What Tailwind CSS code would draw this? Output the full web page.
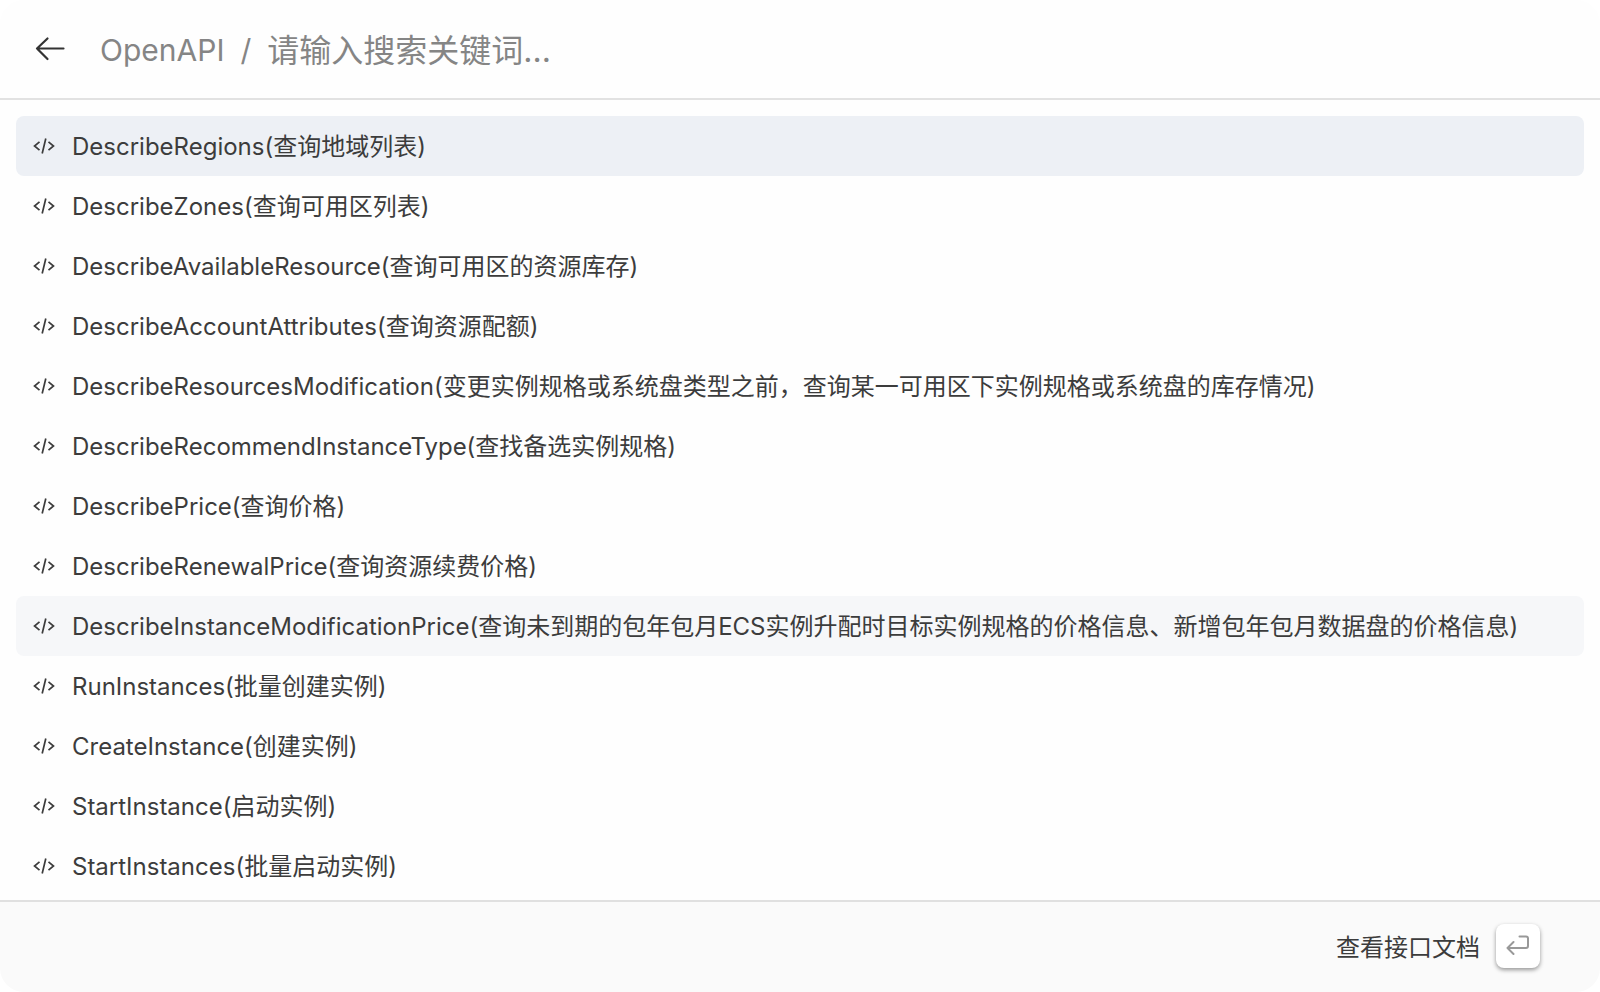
<!DOCTYPE html>
<html lang="zh-CN">
<head>
    <meta charset="UTF-8">
    <meta name="viewport" content="width=device-width, initial-scale=1.0">
    <title>OpenAPI</title>
    <script src="https://cdn.jsdelivr.net/npm/@tailwindcss/browser@4"></script>
</head>
<body class="bg-white font-['Inter','Noto_Sans_CJK_SC',sans-serif] text-[#3c3c3c]">
    <svg class="hidden">
        <symbol id="code" viewBox="0 0 24 24">
            <path d="M7.500 7.800 2.500 12l5 4.200M16.500 7.800l5 4.200-5 4.200M13.800 4.500 10.200 19.500" fill="none" stroke="currentColor" stroke-width="1.700"/>
        </symbol>
    </svg>

    <div class="flex flex-col min-h-screen rounded-3xl overflow-hidden bg-[#fefefe]">
        <header class="flex items-center h-25 px-8 gap-8 border-b-2 border-[#e2e2e2]">
            <button type="button" aria-label="返回" class="text-[#333]">
                <svg class="w-9 h-9" viewBox="0 0 36 36" fill="none" stroke="currentColor" stroke-width="2.2" stroke-linecap="round" stroke-linejoin="round">
                    <path d="M31.500 17.500H5M15.500 7.500 5 17.500l10.500 10.500"/>
                </svg>
            </button>
            <div class="flex flex-1 items-center gap-4 pt-0.5 text-[#858585]">
                <label for="search" class="flex gap-4 text-3xl"><span>OpenAPI</span><span>/</span></label>
                <input type="text" id="search" placeholder="请输入搜索关键词..." class="flex-1 min-w-0 h-16 text-[32px] outline-none bg-transparent placeholder:text-[#858585]">
            </div>
        </header>

        <main class="flex-1 px-4 pt-4 pb-1">
            <ul id="api-list">
                <li><button type="button" class="flex items-center w-full h-15 px-4 gap-4 rounded-lg text-2xl text-left bg-[#edf0f5]"><svg class="w-6 h-6 shrink-0"><use href="#code"/></svg><span class="pt-0.5">DescribeRegions(查询地域列表)</span></button></li>
                <li><button type="button" class="flex items-center w-full h-15 px-4 gap-4 rounded-lg text-2xl text-left"><svg class="w-6 h-6 shrink-0"><use href="#code"/></svg><span class="pt-0.5">DescribeZones(查询可用区列表)</span></button></li>
                <li><button type="button" class="flex items-center w-full h-15 px-4 gap-4 rounded-lg text-2xl text-left"><svg class="w-6 h-6 shrink-0"><use href="#code"/></svg><span class="pt-0.5">DescribeAvailableResource(查询可用区的资源库存)</span></button></li>
                <li><button type="button" class="flex items-center w-full h-15 px-4 gap-4 rounded-lg text-2xl text-left"><svg class="w-6 h-6 shrink-0"><use href="#code"/></svg><span class="pt-0.5">DescribeAccountAttributes(查询资源配额)</span></button></li>
                <li><button type="button" class="flex items-center w-full h-15 px-4 gap-4 rounded-lg text-2xl text-left"><svg class="w-6 h-6 shrink-0"><use href="#code"/></svg><span class="pt-0.5">DescribeResourcesModification(变更实例规格或系统盘类型之前，查询某一可用区下实例规格或系统盘的库存情况)</span></button></li>
                <li><button type="button" class="flex items-center w-full h-15 px-4 gap-4 rounded-lg text-2xl text-left"><svg class="w-6 h-6 shrink-0"><use href="#code"/></svg><span class="pt-0.5">DescribeRecommendInstanceType(查找备选实例规格)</span></button></li>
                <li><button type="button" class="flex items-center w-full h-15 px-4 gap-4 rounded-lg text-2xl text-left"><svg class="w-6 h-6 shrink-0"><use href="#code"/></svg><span class="pt-0.5">DescribePrice(查询价格)</span></button></li>
                <li><button type="button" class="flex items-center w-full h-15 px-4 gap-4 rounded-lg text-2xl text-left"><svg class="w-6 h-6 shrink-0"><use href="#code"/></svg><span class="pt-0.5">DescribeRenewalPrice(查询资源续费价格)</span></button></li>
                <li><button type="button" class="flex items-center w-full h-15 px-4 gap-4 rounded-lg text-2xl text-left bg-[#f6f7f9]"><svg class="w-6 h-6 shrink-0"><use href="#code"/></svg><span class="pt-0.5">DescribeInstanceModificationPrice(查询未到期的包年包月ECS实例升配时目标实例规格的价格信息、新增包年包月数据盘的价格信息)</span></button></li>
                <li><button type="button" class="flex items-center w-full h-15 px-4 gap-4 rounded-lg text-2xl text-left"><svg class="w-6 h-6 shrink-0"><use href="#code"/></svg><span class="pt-0.5">RunInstances(批量创建实例)</span></button></li>
                <li><button type="button" class="flex items-center w-full h-15 px-4 gap-4 rounded-lg text-2xl text-left"><svg class="w-6 h-6 shrink-0"><use href="#code"/></svg><span class="pt-0.5">CreateInstance(创建实例)</span></button></li>
                <li><button type="button" class="flex items-center w-full h-15 px-4 gap-4 rounded-lg text-2xl text-left"><svg class="w-6 h-6 shrink-0"><use href="#code"/></svg><span class="pt-0.5">StartInstance(启动实例)</span></button></li>
                <li><button type="button" class="flex items-center w-full h-15 px-4 gap-4 rounded-lg text-2xl text-left"><svg class="w-6 h-6 shrink-0"><use href="#code"/></svg><span class="pt-0.5">StartInstances(批量启动实例)</span></button></li>
            </ul>
        </main>

        <footer class="flex items-center justify-end h-23 px-15 pb-0.5 border-t-2 border-[#e0e0e0] bg-[#fafafa]">
            <button type="button" class="flex items-center gap-4 text-2xl">
                <span class="pt-1">查看接口文档</span>
                <kbd class="flex items-center justify-center w-11 h-11 rounded-lg bg-white text-[#999] shadow-[0_2px_4px_rgba(0,0,0,0.4)]">
                    <svg class="w-6 h-6" viewBox="0 0 24 24" fill="none" stroke="currentColor" stroke-width="2" stroke-linecap="round" stroke-linejoin="round">
                        <path d="M13.500 2.500H20a2 2 0 0 1 2 2v7.500a2 2 0 0 1-2 2H1.500M7.500 8l-6 6 6 6"/>
                    </svg>
                </kbd>
            </button>
        </footer>
    </div>
</body>
</html>
